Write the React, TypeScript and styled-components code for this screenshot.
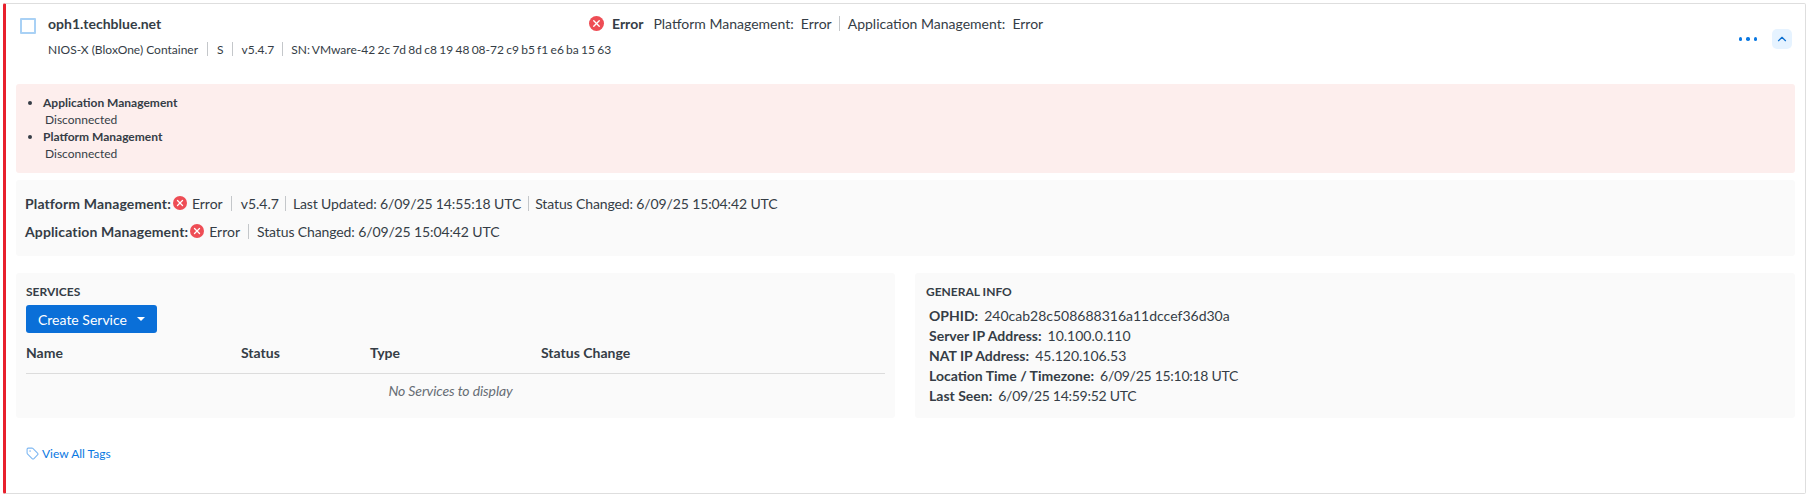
import React from 'react';
import styled, { createGlobalStyle } from 'styled-components';
import { ChevronUp, Tag, X } from 'lucide-react';

const GlobalStyle = createGlobalStyle`
  html, body {
    margin: 0;
    padding: 0;
    background: #fff;
  }
  body {
    font-family: Lato, "Open Sans", sans-serif;
    color: #353d46;
  }
`;

const Page = styled.div`
  padding: 3px 1px 3px 3px;
  height: 497px;
  box-sizing: border-box;
`;

const Card = styled.div`
  height: 491px;
  box-sizing: border-box;
  background: #fff;
  border: 1px solid #dedede;
  border-left: 3px solid #e8202d;
  border-radius: 2px;
  padding: 0 9px 0 10px;
`;

const Header = styled.div`
  display: flex;
  align-items: flex-start;
  height: 80px;
  box-sizing: border-box;
  padding: 10px 4px 0 4px;
`;

const HeaderMain = styled.div`
  flex: 1;
`;

const TitleRow = styled.div`
  display: flex;
  align-items: center;
  height: 18px;
`;

const Checkbox = styled.span`
  width: 12px;
  height: 12px;
  border: 2px solid #a9d1f5;
  border-radius: 1px;
  margin-right: 12px;
  margin-top: 6px;
  flex: none;
`;

const Title = styled.div`
  width: 541px;
  flex: none;
  font-size: 14px;
  font-weight: 700;
  color: #353d46;
`;

const StatusIcon = styled.span<{ $size: number }>`
  width: ${props => props.$size}px;
  height: ${props => props.$size}px;
  border-radius: 50%;
  background: #ee4d55;
  color: #fff;
  display: inline-flex;
  align-items: center;
  justify-content: center;
  flex: none;
`;

const StatusLabel = styled.span`
  font-size: 14px;
  font-weight: 700;
  margin-left: 8px;
  margin-right: 10px;
`;

const StatusText = styled.span`
  font-size: 14px;
  color: #353d46;
  white-space: pre;
`;

const Divider = styled.span<{ $height: number; $gap: number }>`
  width: 1px;
  height: ${props => props.$height}px;
  background: #c4c7ca;
  margin: 0 ${props => props.$gap}px;
  flex: none;
`;

const SubRow = styled.div`
  display: flex;
  align-items: center;
  height: 18px;
  margin-top: 8px;
  padding-left: 28px;
  font-size: 12px;
  color: #353d46;
`;

const SerialText = styled.span`
  word-spacing: -0.8px;
`;

const Actions = styled.div`
  display: flex;
  align-items: center;
  margin-top: 15px;
`;

const Dots = styled.div`
  display: flex;
  gap: 4px;
  margin-right: 15px;
`;

const Dot = styled.span`
  width: 3.5px;
  height: 3.5px;
  border-radius: 50%;
  background: #0a78e2;
`;

const ChevronButton = styled.div`
  width: 20px;
  height: 20px;
  border-radius: 5px;
  background: #e6f3ff;
  color: #0a6fd0;
  display: flex;
  align-items: center;
  justify-content: center;
`;

const AlertBox = styled.div`
  background: #fdeeed;
  border-radius: 3px;
  height: 89px;
  box-sizing: border-box;
  padding: 10px 0 0 0;
  margin-right: 1px;
`;

const AlertList = styled.ul`
  margin: 0;
  padding: 0 0 0 27px;
  font-size: 12px;
  line-height: 17px;
`;

const AlertTitle = styled.li`
  font-weight: 700;
`;

const AlertDetail = styled.div`
  font-weight: 400;
  padding-left: 2px;
`;

const StatusBox = styled.div`
  background: #fafafa;
  border-radius: 3px;
  height: 76px;
  box-sizing: border-box;
  margin-top: 7px;
  margin-right: 1px;
  padding: 13px 9px 0;
`;

const StatusRow = styled.div`
  display: flex;
  align-items: center;
  height: 20px;
  margin-bottom: 8px;
  font-size: 14px;
`;

const RowLabel = styled.span`
  font-weight: 700;
  letter-spacing: 0.13px;
  margin-right: 2px;
`;

const RowIconGap = styled.span`
  margin-left: 5px;
`;

const RowDetail = styled.span`
  letter-spacing: -0.12px;
`;

const Columns = styled.div`
  display: grid;
  grid-template-columns: 879px 1fr;
  gap: 20px;
  margin-top: 17px;
  margin-right: 1px;
`;

const Panel = styled.div`
  background: #fafafa;
  border-radius: 3px;
  height: 145px;
  box-sizing: border-box;
  padding: 12px 10px 0;
`;

const SectionLabel = styled.div`
  font-size: 12px;
  line-height: 14px;
  font-weight: 700;
  color: #353d46;
`;

const CreateButton = styled.button`
  display: flex;
  align-items: center;
  width: 131px;
  height: 28px;
  margin-top: 6px;
  padding: 0 0 0 12px;
  border: none;
  border-radius: 3px;
  background: #0a6fd8;
  color: #fff;
  font-family: inherit;
  font-size: 14px;
`;

const Caret = styled.span`
  width: 0;
  height: 0;
  margin-left: 10px;
  border-left: 4px solid transparent;
  border-right: 4px solid transparent;
  border-top: 4px solid #fff;
`;

const Table = styled.div`
  margin-top: 10px;
`;

const TableHead = styled.div`
  display: grid;
  grid-template-columns: 215px 129px 171px 1fr;
  height: 18px;
  padding-bottom: 12px;
  align-items: center;
  border-bottom: 1px solid #dcdcdc;
  font-size: 14px;
  font-weight: 700;
`;

const EmptyRow = styled.div`
  height: 33px;
  display: flex;
  align-items: center;
  justify-content: center;
  padding-right: 10px;
  font-size: 14px;
  font-style: italic;
  letter-spacing: -0.1px;
  color: #666d74;
`;

const InfoPanel = styled(Panel)`
  padding-left: 11px;
`;

const InfoList = styled.div`
  margin-top: 6px;
  padding-left: 3px;
`;

const InfoRow = styled.div`
  display: flex;
  height: 20px;
  align-items: center;
  font-size: 14px;
  white-space: pre;
`;

const InfoKey = styled.span`
  font-weight: 700;
  margin-right: 6px;
`;

const InfoValue = styled.span<{ $tight?: boolean }>`
  letter-spacing: ${props => (props.$tight ? '-0.28px' : 'normal')};
`;

const TagsLink = styled.a`
  display: inline-flex;
  align-items: center;
  gap: 3px;
  margin-top: 28px;
  margin-left: 10px;
  font-size: 12px;
  color: #0a78e2;
`;

const TagIcon = styled(Tag)`
  color: #7db7f2;
`;

const ErrorIcon = ({ size }: { size: number }) => (
  <StatusIcon $size={size}>
    <X size={size - 4} strokeWidth={3} />
  </StatusIcon>
);

const info = [
  { key: 'OPHID:', value: '240cab28c508688316a11dccef36d30a' },
  { key: 'Server IP Address:', value: '10.100.0.110' },
  { key: 'NAT IP Address:', value: '45.120.106.53' },
  { key: 'Location Time / Timezone:', value: '6/09/25 15:10:18 UTC', tight: true },
  { key: 'Last Seen:', value: '6/09/25 14:59:52 UTC', tight: true },
];

const App: React.FC = () => (
  <>
    <GlobalStyle />
    <Page>
      <Card>
        <Header>
          <HeaderMain>
            <TitleRow>
              <Checkbox />
              <Title>oph1.techblue.net</Title>
              <ErrorIcon size={15} />
              <StatusLabel>Error</StatusLabel>
              <StatusText>Platform Management:  Error</StatusText>
              <Divider $height={15} $gap={7.5} />
              <StatusText>Application Management:  Error</StatusText>
            </TitleRow>
            <SubRow>
              NIOS-X (BloxOne) Container
              <Divider $height={14} $gap={9} />
              S
              <Divider $height={14} $gap={8.5} />
              v5.4.7
              <Divider $height={14} $gap={8} />
              <SerialText>SN: VMware-42 2c 7d 8d c8 19 48 08-72 c9 b5 f1 e6 ba 15 63</SerialText>
            </SubRow>
          </HeaderMain>
          <Actions>
            <Dots>
              <Dot />
              <Dot />
              <Dot />
            </Dots>
            <ChevronButton>
              <ChevronUp size={14} strokeWidth={2} />
            </ChevronButton>
          </Actions>
        </Header>

        <AlertBox>
          <AlertList>
            <AlertTitle>
              Application Management
              <AlertDetail>Disconnected</AlertDetail>
            </AlertTitle>
            <AlertTitle>
              Platform Management
              <AlertDetail>Disconnected</AlertDetail>
            </AlertTitle>
          </AlertList>
        </AlertBox>

        <StatusBox>
          <StatusRow>
            <RowLabel>Platform Management:</RowLabel>
            <ErrorIcon size={14} />
            <RowIconGap>Error</RowIconGap>
            <Divider $height={15} $gap={8.5} />
            v5.4.7
            <Divider $height={15} $gap={6.5} />
            <RowDetail>Last Updated: 6/09/25 14:55:18 UTC</RowDetail>
            <Divider $height={15} $gap={6.5} />
            <RowDetail>Status Changed: 6/09/25 15:04:42 UTC</RowDetail>
          </StatusRow>
          <StatusRow>
            <RowLabel>Application Management:</RowLabel>
            <ErrorIcon size={14} />
            <RowIconGap>Error</RowIconGap>
            <Divider $height={15} $gap={8} />
            <RowDetail>Status Changed: 6/09/25 15:04:42 UTC</RowDetail>
          </StatusRow>
        </StatusBox>

        <Columns>
          <Panel>
            <SectionLabel>SERVICES</SectionLabel>
            <CreateButton>
              Create Service
              <Caret />
            </CreateButton>
            <Table>
              <TableHead>
                <span>Name</span>
                <span>Status</span>
                <span>Type</span>
                <span>Status Change</span>
              </TableHead>
              <EmptyRow>No Services to display</EmptyRow>
            </Table>
          </Panel>
          <InfoPanel>
            <SectionLabel>GENERAL INFO</SectionLabel>
            <InfoList>
              {info.map(({ key, value, tight }) => (
                <InfoRow key={key}>
                  <InfoKey>{key}</InfoKey>
                  <InfoValue $tight={tight}>{value}</InfoValue>
                </InfoRow>
              ))}
            </InfoList>
          </InfoPanel>
        </Columns>

        <TagsLink>
          <TagIcon size={13} />
          View All Tags
        </TagsLink>
      </Card>
    </Page>
  </>
);

export default App;
